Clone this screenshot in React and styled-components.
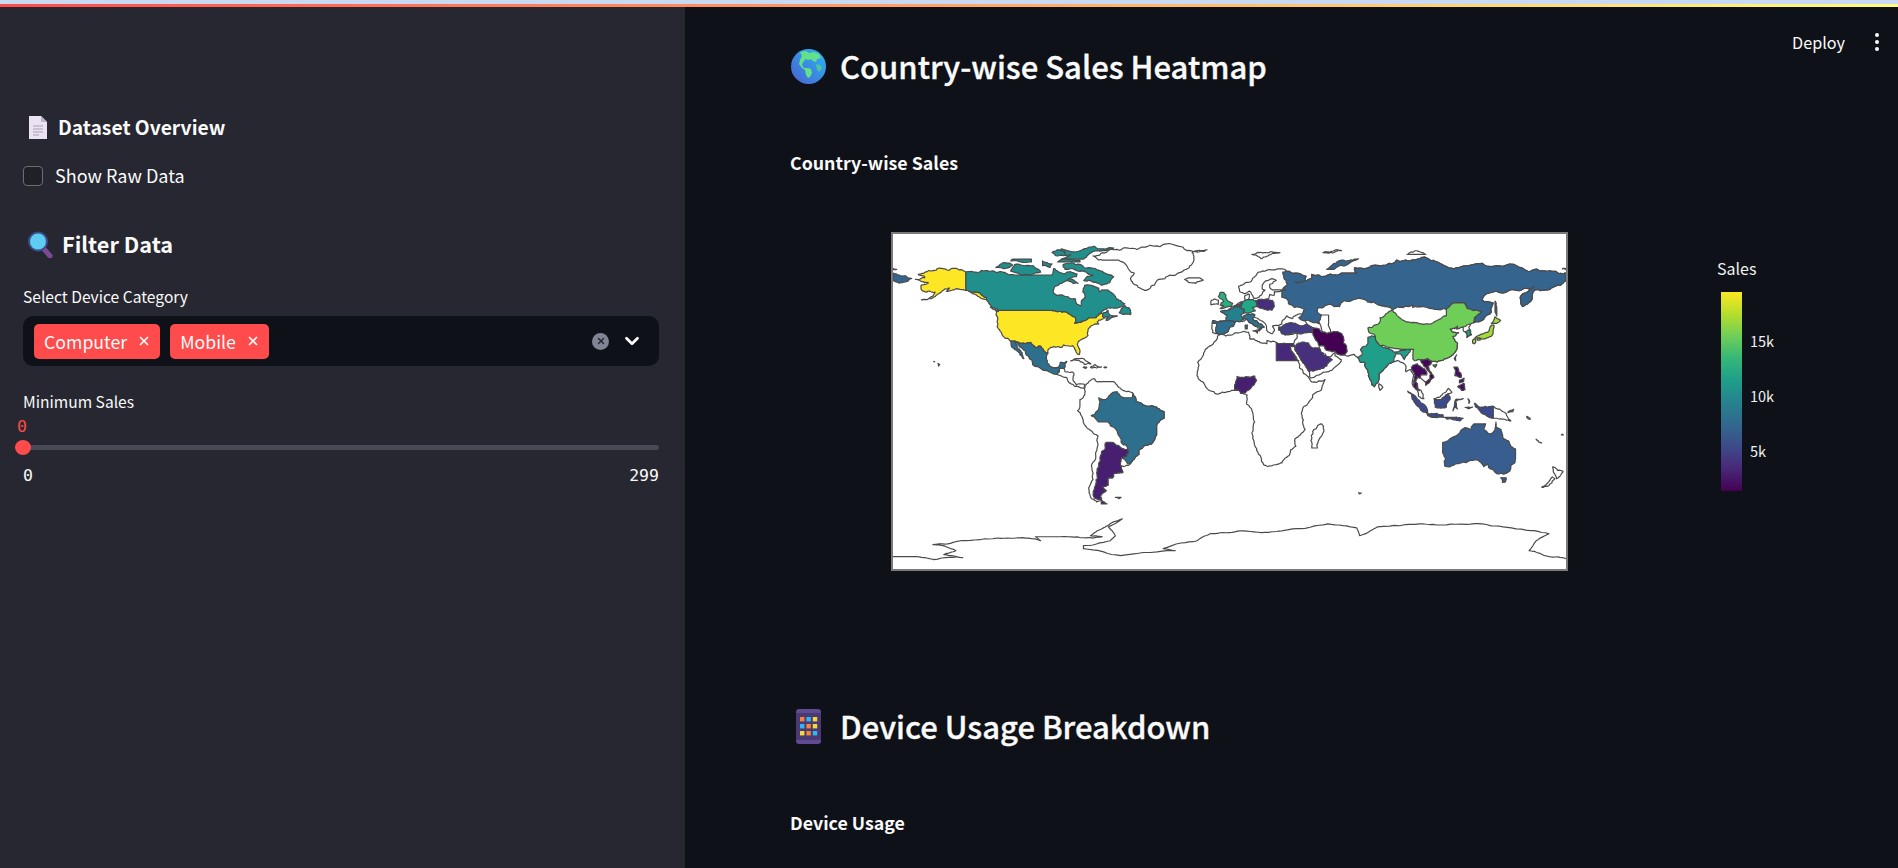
import React from "react";
import styled, { createGlobalStyle } from "styled-components";
import { LuChevronDown, LuX } from "react-icons/lu";

const SANS = `"Noto Sans CJK SC", "Noto Sans", sans-serif`;
const MONO = `"DejaVu Sans Mono", "Liberation Mono", monospace`;

const GlobalStyle = createGlobalStyle`
  html, body {
    margin: 0;
    height: 100%;
    overflow: hidden;
    background: #0e1117;
    font-family: ${SANS};
  }
`;

const Page = styled.div`
  position: relative;
  display: flex;
  height: 868px;
  overflow: hidden;
  color: #fafafa;
`;

const TopStrip = styled.div`
  position: absolute;
  top: 0;
  left: 0;
  right: 0;
  height: 7px;
  background: linear-gradient(#c9d9f2 0 4px, transparent 4px),
    linear-gradient(90deg, #ff4b4b, #fffd80);
`;

const Sidebar = styled.aside`
  width: 685px;
  flex: none;
  box-sizing: border-box;
  padding: 113px 26px 0 23px;
  background: #262730;
`;

const SideHeading = styled.h3`
  display: flex;
  align-items: center;
  margin: ${(p) => p.$top || 0}px 0 0 ${(p) => p.$left || 0}px;
  padding-bottom: 2px;
  gap: ${(p) => p.$gap}px;
  font-size: ${(p) => p.$size}px;
  line-height: ${(p) => p.$line - 2}px;
  font-weight: 600;
`;

const CheckRow = styled.label`
  display: flex;
  align-items: center;
  gap: 12px;
  margin-top: 21px;
  font-size: 18px;
  line-height: 24px;
`;

const CheckLabel = styled.span`
  padding-bottom: 2px;
  line-height: 22px;
`;

const CheckBox = styled.span`
  width: 18px;
  height: 18px;
  border: 1px solid #6b6d78;
  border-radius: 4px;
  background: #1f2028;
`;

const FieldLabel = styled.div`
  margin-top: ${(p) => p.$top}px;
  padding-bottom: 2px;
  font-size: 15.6px;
  line-height: 22px;
`;

const SelectBox = styled.div`
  display: flex;
  align-items: center;
  height: 50px;
  margin-top: 7px;
  padding: 0 16px 0 11px;
  border-radius: 10px;
  background: #0e1117;
`;

const Tags = styled.div`
  display: flex;
  gap: 10px;
  flex: 1;
`;

const Tag = styled.span`
  display: flex;
  align-items: center;
  gap: 10px;
  height: 35px;
  padding: 0 9px 1px 10px;
  box-sizing: border-box;
  border-radius: 5px;
  background: #ff4b4b;
  font-size: 17.7px;
`;

const ClearIcon = styled.span`
  display: flex;
  align-items: center;
  justify-content: center;
  width: 17px;
  height: 17px;
  margin-right: 12px;
  border-radius: 50%;
  background: #808495;
  color: #262730;
`;

const SliderValue = styled.div`
  margin: 3px 0 0 -6px;
  color: #ff4b4b;
  font-family: ${MONO};
  font-size: 16.5px;
  line-height: 20px;
`;

const SliderTrack = styled.div`
  position: relative;
  height: 5px;
  margin: 8px 0 0;
  border-radius: 3px;
  background: #484954;
`;

const SliderThumb = styled.span`
  position: absolute;
  left: -8px;
  top: -5px;
  width: 16px;
  height: 15px;
  border-radius: 50%;
  background: #ff4b4b;
`;

const SliderEnds = styled.div`
  display: flex;
  justify-content: space-between;
  margin-top: 15px;
  font-family: ${MONO};
  font-size: 16.5px;
  line-height: 22px;
`;

const Main = styled.main`
  flex: 1;
  min-width: 0;
  padding: 42px 0 0 105px;
`;

const PageTitle = styled.h2`
  display: flex;
  align-items: center;
  gap: 14px;
  margin: ${(p) => p.$top || 0}px 0 0 1px;
  padding-bottom: 2px;
  font-size: 31px;
  line-height: 48px;
  font-weight: 500;
  -webkit-text-stroke: 0.35px #fafafa;
`;

const ChartTitle = styled.div`
  margin-top: 59px;
  padding-bottom: 2px;
  font-size: 17.8px;
  line-height: 22px;
  font-weight: 700;
`;

const ChartRow = styled.div`
  display: flex;
  align-items: flex-start;
  gap: 149px;
  margin: 57px 0 0 101px;
`;

const MapFrame = styled.svg`
  display: block;
  width: 677px;
  height: 339px;
  box-sizing: border-box;
  border: 2px solid #7a7a7a;
  background: #fff;
`;

const Legend = styled.div`
  padding-top: 26px;
  color: #f0f0f0;
`;

const LegendTitle = styled.div`
  font-size: 16px;
  line-height: 20px;
`;

const LegendBody = styled.div`
  display: flex;
  gap: 8px;
  margin: 14px 0 0 4px;
`;

const ColorBar = styled.div`
  width: 21px;
  height: 199px;
  background: linear-gradient(
    to top,
    #440154,
    #482878,
    #3e4a89,
    #31688e,
    #26828e,
    #1f9e89,
    #35b779,
    #6ece58,
    #b5de2b,
    #fde725
  );
`;

const TickColumn = styled.div`
  display: flex;
  flex-direction: column;
  gap: 35px;
  padding-top: 39px;
  font-size: 14.5px;
  line-height: 20px;
`;

const Toolbar = styled.div`
  position: absolute;
  top: 30px;
  right: 19px;
  display: flex;
  align-items: center;
  gap: 30px;
  font-size: 16.2px;
  line-height: 24px;
`;

const Dots = styled.span`
  display: flex;
  flex-direction: column;
  gap: 3px;
  i {
    width: 4px;
    height: 4px;
    border-radius: 50%;
    background: #fafafa;
  }
`;

const DocIcon = () => (
  <svg width="20" height="23" viewBox="0 0 20 23">
    <path d="M1 0h12l6 6v17H1z" fill="#ece3f2" />
    <path d="M13 0l6 6h-6z" fill="#bdb3c8" />
    <path d="M5 10h10M5 13h10M5 16h10M5 19h6" stroke="#a89fb2" strokeWidth="1" />
  </svg>
);

const SearchIcon = () => (
  <svg width="26" height="27" viewBox="0 0 26 27">
    <path d="M17 18l6 7" stroke="#7c4a94" strokeWidth="5" strokeLinecap="round" />
    <circle cx="11" cy="10.5" r="10" fill="#3b4f8f" />
    <circle cx="11" cy="10.5" r="8" fill="#5fcdf2" />
  </svg>
);

const GlobeIcon = () => (
  <svg width="35" height="35" viewBox="0 0 35 35">
    <defs>
      <linearGradient id="globeFill" x1="0" y1="1" x2="1" y2="0">
        <stop offset="0" stopColor="#4a5fd0" />
        <stop offset="1" stopColor="#2bb8f5" />
      </linearGradient>
    </defs>
    <circle cx="17.5" cy="17.5" r="17.5" fill="url(#globeFill)" />
    <path
      d="M9 3l6-1 3 2 5-1 5 2 2 4-4 1-1 3-3-1-2-2-3 1-3-1-1 3-1 0-1 3 2 3 4 0 3 1 1 4-2 4-2 1-2-3-1-5-3-2-3-4 1-4 2-4z"
      fill="#63e08a"
    />
    <path d="M25 15l4 1 2 3-3 4-2-3z" fill="#4fc6a0" />
  </svg>
);

const GridIcon = () => (
  <svg width="35" height="35" viewBox="0 0 35 35">
    <rect x="5" y="0" width="25" height="35" rx="3" fill="#5f4a96" />
    <rect x="5" y="4" width="25" height="27" fill="#4b3a72" />
    {[0, 1, 2].map((r) =>
      [0, 1, 2].map((c) => (
        <rect
          key={`${r}${c}`}
          x={9 + c * 6.4}
          y={8 + r * 7}
          width="4.4"
          height="4.4"
          fill={["#f58634", "#2bb8f5", "#f5d936"][(r + c * (r === 1 ? 2 : 1)) % 3]}
        />
      ))
    )}
  </svg>
);

// lon,lat rings; the map is a plain equirectangular projection
const X = (lon) => (lon + 180) * 1.875;
const Y = (lat) => (90 - lat) * 1.875;

// roughen coastlines. the offset only depends on the segment midpoint so two
// countries sharing an edge get the same wiggle. straight borders stay straight
const noise = (x, y) => {
  const s = Math.sin(x * 12.9898 + y * 78.233) * 43758.5453;
  return s - Math.floor(s) - 0.5;
};
const roughen = (a, b, depth, amp, out) => {
  const dx = b[0] - a[0];
  const dy = b[1] - a[1];
  const len = Math.hypot(dx, dy);
  if (depth === 0 || len < 0.9 || dx === 0 || dy === 0) {
    out.push(b);
    return;
  }
  const mx = (a[0] + b[0]) / 2;
  const my = (a[1] + b[1]) / 2;
  const mid = [mx + noise(mx, my) * len * amp, my + noise(my, mx) * len * amp];
  roughen(a, mid, depth - 1, amp, out);
  roughen(mid, b, depth - 1, amp, out);
};

const ring = (s) => {
  const pts = s
    .trim()
    .split(/\s+/)
    .map((p) => p.split(",").map(Number));
  const out = [pts[0]];
  for (let i = 1; i < pts.length; i++) roughen(pts[i - 1], pts[i], 3, 0.32, out);
  return (
    "M" + out.map(([lon, lat]) => `${X(lon).toFixed(1)} ${Y(lat).toFixed(1)}`).join("L") + "Z"
  );
};

const LAND = [
  // greenland
  "-73,78.2 -68,80 -62,81.5 -52,82.3 -40,83.5 -25,83 -18,81 -12,81.5 -20,80 -19,76 -20,74 -23,71 -25,70 -32,68 -38,65.5 -42,62 -44,60 -48,61 -51,63 -53,66 -51,69 -54,71 -56,74 -60,76 -68,76 -71,77 -73,78.2",
  "-24,65.5 -22,66.4 -16,66.4 -14,65.3 -18,63.5 -22,64 -24,65.5",
  "12,79 16,80 22,80.5 27,80 20,78 17,76.7 12,79",
  // central america + caribbean
  "-92.2,14.6 -91,16 -91,17.8 -88.5,17.8 -88,16 -84,15.8 -83.2,14.8 -83.6,11 -82,9 -79.5,9.5 -77.3,8.7 -77.9,7.2 -80,7.5 -83,8.2 -85.7,10 -87.5,13 -92.2,14.6",
  "-85,21.8 -82,23 -80,23 -75,20.8 -74.2,20.2 -77.7,19.9 -78,20.7 -82,22.2 -85,21.8",
  "-74.4,18.4 -72,19.9 -68.5,18.6 -71,18 -74.4,18.4",
  "-78.3,18.4 -76.3,18.2 -77,17.8 -78.3,18.4",
  "-67.2,18.4 -65.7,18.3 -66.5,18 -67.2,18.4",
  "-156,20.5 -155,19.8 -155.7,19 -156,20.5",
  "-158.2,21.5 -157.7,21.4 -158,21.3 -158.2,21.5",
  // south america
  "-77.3,8.7 -75,11 -72,12.2 -71.5,11 -68,10.7 -62,10.7 -60,8.5 -57,6 -52,4.8 -50,1 -50,0 -44,-2.5 -39,-3 -35,-5.5 -35,-9 -39,-13 -39,-18 -41,-22 -45,-23.5 -48.5,-26 -48.5,-28.5 -52,-32 -54,-34.3 -58,-34.5 -57,-38 -62,-39 -62.5,-41 -65,-41 -65,-45 -68,-46 -66,-48 -69,-51 -68.3,-52.3 -71,-54 -74,-52 -75,-48 -73,-42 -73.5,-37 -71.5,-30 -70.3,-18.5 -75,-15 -79,-8 -81.3,-5 -80,-2.5 -80,1 -78,3 -77.5,7 -77.3,8.7",
  "-61,-51.5 -58,-51.5 -59,-52.2 -61,-51.5",
  // africa
  "-6,35.8 -2,35.2 3,36.9 10,37.3 11,33.5 15,32.3 20,31 20,32.8 25,31.7 32,31.2 34.3,31.2 32.5,29.9 34,26 37,21 37.5,18 39.5,15 43,12 44,10.5 51.2,11.8 49,6 42,-1 39,-5 39.5,-10 40.5,-15 35,-20 35.5,-24 32.7,-26 32,-29 28,-33 25,-34 20,-34.8 18.3,-34 15,-27 12,-17 13.5,-11 12,-5 9,-1 9.5,3.5 5,6 1,6 -4,5 -8,4.5 -13,8.5 -16.8,12.5 -17.3,14.7 -16.3,19.5 -17,21 -13,27.7 -10,30 -6,35.8",
  "49.3,-12 50.5,-16 47,-25 44,-25 43.5,-21 44.5,-16 49.3,-12",
  // eurasia coast
  "-9,37 -9.5,39 -9,43 -2,43.5 -1.2,46 -4.7,48.4 -1.5,48.7 1.5,50.9 4,52 8,53.8 8.3,57 10.5,57.7 10,55 12,54 14,54 18.5,54.7 21,55.5 21.5,57.5 24,57.2 24,59 28,59.6 30,60 23,60 21.5,61.5 21.5,63 25,65 22,65.8 17.5,62.5 17.5,60.5 19,59.8 16.5,57 14.5,55.5 13,55.4 11.5,58.5 10.7,59.3 8,58 5.5,59 5,62 10,64 14,67.5 19,70 25,71 31,70 41,67.3 40,64.6 35,64.3 38,64 44,66 44,68.3 54,68.5 60,69 68,69 67,72 73,71.5 75,72 80,73 87,74 100,76.3 104,77.7 113,74 128,73 140,72.5 160,69.7 170,70 180,69 180,65 177,62.5 170,60 163,59.8 162,56 156.8,51 155.7,56.5 163,61.5 155,59.5 143,59.3 135,54.7 141,53 140,48 135,43.5 132,43 130,42.3 128,40 129.4,36 127,34.5 126.3,37 125,38 125,40 121.5,39 122,40.5 118,39 119,37.5 122.5,37 119.5,35 122,31 121.5,28 117,23.5 113,22 108.5,21.5 106,19 109.3,13 107,10.5 105,8.8 105,10.5 102,12.7 100.5,13.5 99.5,11 100.5,7 103.5,4 104,1.5 101,3 100,6.5 98.3,8 98.5,14 97,17 94.3,16 94.5,18.5 92,21 90,22 87,21 82,16.5 80,15 80,12 77.5,8 75,12 73,18 72.5,21 70,21 68,24 66.5,25.4 61.5,25 57.5,25.7 56.5,27 52,27.5 50,30 48,30 48,28.5 50,26 51.5,25 51,24 54,24 56.3,26.2 56.5,24.5 59.8,22.5 55,17 52,16 45,13 43.2,12.8 42.7,16 39,21.5 37,25 35,28 34.9,29.5 34.3,31.2 35.5,33.5 36,36.8 32,36 28,36.5 26.3,38.5 26.5,40 29,41 35,42 41.5,41.5 38,44.5 39,47 35,46 33.5,44.5 30.5,46 28,43 28,41.5 26,40.8 23,40.5 24,38 23,36.5 21.5,37 19.5,41 19,42 14,45 12.5,45.5 12.5,44 16,41.5 18.5,40 17,39 16,38 15,40 12,42 8.8,44.4 6,43 3,43 0,39.5 -0.7,37.7 -2.5,36.7 -5.5,36 -9,37",
  "49,46.5 53,46.5 53,42 54,37 50,37.3 49,40 47.5,43 49,46.5",
  "-10,52 -6,52.2 -6,54.5 -8,55.2 -10,54 -10,52",
  "80,9.6 82,7.5 80.5,6 79.8,8 80,9.6",
  // borneo north (malaysia stays white here)
  "109.5,1.5 113,3 117,7 119,5 117,4.2 115,2.5 113,1 109.5,1.5",
  "141,-2.6 145,-4.5 148,-6.5 150.5,-10.5 147,-9.5 143,-9 141,-9 141,-2.6",
  "149,-5.5 152,-4.2 151.5,-5.5 149,-6 149,-5.5",
  "167,-46 171,-45 174,-41.5 172.7,-40.5 167,-46",
  "173,-35 175.5,-37 178.5,-37.7 175,-41.5 174,-39 173,-35",
  "69,-49 70.5,-49.2 69.5,-49.7 69,-49",
  "165,-21 167,-22.3 165.5,-21.8 164,-20.3 165,-21",
  "159,-8 161,-9.5 160,-9.5 159,-8",
  "178,-17.5 178.6,-18 177.5,-18 178,-17.5",
  "95,79 105,79 100,81 95,79",
  "50,80 60,81 56,80.2 50,80",
  "-180,71.5 -178,71 -180,70.8 -180,71.5",
  "178,71.3 180,71.5 180,70.8 178,71.3",
];

const COUNTRIES = [
  // north america
  ["#fde725", "-124.7,48.4 -123,49 -95.2,49 -94.6,48.7 -92,48.3 -89.5,48 -88.4,48.3 -84.8,46.5 -82.5,45.3 -82.1,43.6 -82.9,42.1 -79,42.8 -79,43.4 -76.5,44 -75,45 -71.5,45 -70.2,46.3 -69.2,47.4 -68,47.3 -67.8,45.7 -67,44.8 -70,43.7 -70.7,42.7 -70,41.7 -74,40.7 -75.5,39 -76,37 -75.7,35.5 -77.9,33.9 -81,32 -81.4,30.5 -80,26.9 -80.4,25.2 -81.8,26.1 -82.8,28 -84,30 -85.5,29.7 -89,30.3 -89.5,29.2 -91.5,29.5 -94,29.6 -97.2,27.7 -97.2,25.9 -99.5,27.5 -101.4,29.8 -103,29 -104.7,30 -106.5,31.8 -108.2,31.5 -111,31.3 -114.8,32.5 -117.1,32.5 -118.5,34 -120.6,34.6 -122.5,37.5 -124.3,40.3 -124,44 -124.7,48.4"],
  ["#fde725", "-141,69.6 -141,60.3 -137,59 -133.5,58.5 -130,56 -130,54.8 -133,55.5 -136,57.5 -140,59.8 -145,60.3 -148,60 -151.5,59.3 -149.8,61 -152,60.5 -154,59 -157,57 -161,55.2 -164.8,54.6 -160,56 -157.5,58.8 -162,58.7 -165,60.5 -165,62.5 -161,63.8 -165,64.5 -168,65.6 -163,66.5 -166.5,68.3 -161,70.3 -156.5,71.3 -150,70.5 -141,69.6"],
  ["#21908d", "-141,69.6 -135,69.3 -128,70 -120,69.4 -115,68 -108,68 -100,68 -95,68 -94,71.5 -92,70 -88,68.5 -85,69.8 -81.5,68.5 -82,67 -87,65 -93,62 -94.5,59 -92.5,57 -88,56.5 -82.3,55 -82,52.9 -79.5,51.5 -79,54.5 -77,56 -78.5,59 -77.5,62.4 -73.5,62.3 -70,61 -69.5,59 -65.5,60 -62,57.5 -60,55 -56,52.5 -60,50.2 -65,50.3 -67,49.3 -70,47 -65,49 -64.5,47 -61,46 -60,46 -63.5,44.7 -66,43.6 -66,44.5 -64.5,45.5 -67,45.2 -67.8,45.7 -68,47.3 -69.2,47.4 -70.2,46.3 -71.5,45 -75,45 -76.5,44 -79,43.4 -79,42.8 -82.9,42.1 -82.1,43.6 -82.5,45.3 -84.8,46.5 -88.4,48.3 -89.5,48 -92,48.3 -94.6,48.7 -95.2,49 -123,49 -125,50 -128,52 -130,54.8 -130,56 -133.5,58.5 -137,59 -141,60.3 -141,69.6"],
  ["#21908d", "-80,73.7 -72,71.5 -68,70 -62,67 -64,64 -68,62.5 -72,64 -78,65 -73,68 -78,70 -88,71 -89,73.5 -80,73.7"],
  ["#21908d", "-117,70 -105,68.5 -101,69.5 -105,73 -115,73.5 -117,70"],
  ["#21908d", "-90,76.5 -78,76.5 -76,78.5 -65,81.5 -62,82.5 -75,83 -90,82 -92,80 -85,79 -90,76.5"],
  ["#21908d", "-125,72 -120,71.5 -116,73.2 -120,74.5 -125,72"],
  ["#21908d", "-92,75 -80,75 -80,76 -90,76.3 -92,75"],
  ["#21908d", "-95,80 -88,78.5 -88,80.5 -92,81.5 -95,80"],
  ["#21908d", "-117,75.5 -106,75 -106,76.5 -116,76.5 -117,75.5"],
  ["#21908d", "-100,73 -96,72 -95,74 -100,75.5 -100,73"],
  ["#21908d", "-87,65 -81,63.5 -83,65 -86,66 -87,65"],
  ["#21908d", "-59,47.6 -53,46.7 -52.7,47.6 -56,51.6 -59,47.6"],
  ["#21908d", "-128,50.7 -123.5,48.4 -125,48.8 -128,50.7"],
  ["#2f6f8e", "-117.1,32.5 -114.8,32.5 -111,31.3 -108.2,31.5 -106.5,31.8 -104.7,30 -103,29 -101.4,29.8 -99.5,27.5 -97.2,25.9 -97.8,22.5 -96,19 -94.5,18.2 -91.5,18.5 -90.5,21 -87,21.5 -88,18.5 -88.5,17.8 -91,17.8 -91,16 -92.2,14.6 -96,15.8 -100,17 -105,19.5 -105.5,22 -109,25.7 -112.5,29.5 -114.7,31.7 -113,28.5 -110.5,24.5 -110,23 -112,25 -115,28 -117.1,32.5"],
  // south america
  ["#2f6f8e", "-60,5.2 -56,2 -52,2 -51.5,4.3 -50,1 -50,0 -44,-2.5 -39,-3 -35,-5.5 -35,-9 -39,-13 -39,-18 -41,-22 -45,-23.5 -48.5,-26 -48.5,-28.5 -52,-32 -53.4,-33.7 -57.6,-30.2 -54,-27 -54.5,-25.5 -55,-24 -58,-22 -58,-20 -60,-16.3 -65,-11 -70,-11 -74,-7.5 -70,-4.2 -69.5,-1 -70,2 -66,1 -63.5,4 -60,5.2"],
  ["#481f70", "-66,-22 -62.5,-22 -58,-24.8 -54.5,-25.5 -54,-27 -57.6,-30.2 -58.4,-34 -57,-38 -62,-39 -62.5,-41 -65,-41 -65,-45 -68,-46 -66,-48 -69,-51 -68.5,-52.3 -72,-52 -73,-50 -71.5,-44 -71,-38 -70,-33 -68.5,-27 -66,-22"],
  ["#481f70", "-68.6,-52.6 -65.5,-55 -68.6,-55 -68.6,-52.6"],
  // europe
  ["#2ab07f", "-5,50 1.3,51.2 1.7,52.7 0,53.5 -1.5,55 -2,56 -2,57.5 -3.2,58.6 -5,58.6 -6,56.5 -3,54 -4.5,53 -5,51.7 -3,51.4 -5,50"],
  ["#25808e", "2.5,51 8.2,49 7.5,47.5 6,46.3 7.5,44 3,43 3,42.5 -1.8,43.4 -1.2,46 -4.7,48.4 -1.5,48.7 1.5,50 2.5,51"],
  ["#2e6e8e", "-9,43.5 -1.8,43.4 3,42.5 0,39.5 -0.7,37.7 -2.5,36.7 -5.5,36 -7.3,37.2 -7,42 -9,42 -9,43.5"],
  ["#31688e", "3,51.3 4,52 7,53.5 6,51 3,51.3"],
  ["#22a884", "6,51 7,53.5 8.5,54.5 10,54.8 14,54 15,51 12.2,50.3 13.8,48.6 10,47.4 7.5,47.5 8.2,49 6,51"],
  ["#2c728e", "7,44 7.5,46 10,46.8 13.7,46.5 12.5,45 12.5,44 16,41.7 18.5,40 16.8,39.5 16,38 15.7,40 12,42 8.8,44.4 7,44"],
  ["#2c728e", "12.5,38 15.5,38.2 15,36.7 12.5,38"],
  ["#2c728e", "8.3,41 9.7,41 9.5,39 8.5,39 8.3,41"],
  ["#472d7b", "14,54 18.5,54.7 23,54.3 24,51 22.5,49.1 19,49.4 15,51 14,54"],
  ["#433e85", "26.3,38.5 26.5,40 29,41 35,42 41.5,41.5 44.8,39.7 44.5,37 36.5,36.5 32,36 28,36.5 26.3,38.5"],
  // russia
  ["#35648f", "28,59.6 30,60 28.5,60.5 31,63 29,66.5 28.5,69.5 31,70 41,67.3 40,64.6 35,64.3 38,64 44,66 44,68.3 54,68.5 60,69 68,69 67,72 73,71.5 75,72 80,73 87,74 100,76.3 104,77.7 113,74 128,73 140,72.5 160,69.7 170,70 180,69 180,65 177,62.5 170,60 163,59.8 162,56 156.8,51 155.7,56.5 163,61.5 155,59.5 143,59.3 135,54.7 141,53 140,48 135,43.5 132,43 130.7,42.3 131,45 135,48.4 130.5,48.8 127,50 125.5,53 120,53 117,49.6 107,50 98,50.5 98,52 92,50.7 87,49.2 83,51 77,53.5 71,55.2 61,54 59,51 51,51.5 47,50 47,48 49,46.5 47.5,43 48,41.8 44,42.7 40,43.5 37,45 39,47 40,49.6 35,50.5 31.5,52.5 31,55 28,56 28,59.6"],
  ["#35648f", "52,71 56,71 69,76.7 60,76 52,71"],
  ["#35648f", "142,54 143,50 143,46 142,48 142,54"],
  ["#35648f", "-180,69 -175,67.5 -170,66 -173,64.3 -180,65 -180,69"],
  // middle east
  ["#440154", "44.8,39.7 48,39 49,37.5 54,37 60,36.5 61,31.5 63,27 61.5,25 57.5,25.7 56.5,27 52,27.5 50,30 48,30 46,33 44.5,37 44.8,39.7"],
  ["#472f7d", "34.9,29.5 37,31.5 39,32 44,29 48,28.5 50,26 51.5,24.5 55,22.5 52,19 47,17 43.2,16.5 42.7,16 39,21.5 37,25 35,28 34.9,29.5"],
  ["#482878", "25,31.7 32,31.2 34.3,31.2 34.3,29.5 32.5,29.9 34,26 37,22 25,22 25,31.7"],
  ["#471f6e", "2.7,6.3 2.7,9 3.7,11.7 4,13.5 7,13 10,13.3 13.6,13.7 14.5,11.5 13.2,9 11,6.7 8.5,4.7 6,4.3 4.3,6.3 2.7,6.3"],
  // asia
  ["#1f9e89", "74,34.5 78,35 79,32 81,30 88,26.5 92,27.5 97,28.5 95.5,25.5 93.5,22.5 92.3,24.5 91.5,25.5 89,26 88.5,24 88,22 87,21 82,16.5 80,15 80,12 77.5,8 75,12 73,18 72.5,21 70,21 68.5,23.7 71,25 70,28 74,31 74,34.5"],
  ["#6ece58", "74,39.5 80,42 80.5,45 87,49 91,45 96,42.7 105,41.7 111,43.5 116,46 116,49.5 120,53 125.5,53 127,50 130.5,48.8 135,48.4 131,45 130.7,42.7 128,41.5 124.3,40 121.5,39 122,40.5 118,39 119,37.5 122.5,37 119.5,35 122,31 121.5,28 117,23.5 113,22 108.5,21.5 106,23 102,22.4 99,22 98,25 98.5,28 92,28 81,30 79,32 78,35 74,39.5"],
  ["#2ab07f", "108.8,19.6 110.8,20 110,18.4 108.8,19.6"],
  ["#35648f", "120.2,23 121.5,25 121,22 120.2,23"],
  ["#a5db36", "130.9,34 135,33.5 140,35 141,38 141.5,41 140,41 139,38 136,36.5 132,35 130.9,34"],
  ["#a5db36", "140,42 143,42 145,43.5 142,45.5 141,43 140,42"],
  ["#a5db36", "130,33 131.8,33.5 131,31 130,31.5 130,33"],
  ["#a5db36", "132.5,34 134.5,34 134,33 132.5,33 132.5,34"],
  ["#1fa187", "126.3,37.6 128.5,38.5 129.4,36 127,34.5 126.3,37.6"],
  ["#46085c", "98.5,10 99.5,11 100.5,13.5 102,12.7 102.5,14.3 105.5,14.3 104.5,17.5 101,19.5 100.5,20.3 98,19.5 97.5,17 99,15 98.5,10"],
  ["#46085c", "98.5,9.5 99.5,10.5 100.5,7 101.5,5.8 100,6.5 98.5,8 98.5,9.5"],
  ["#450457", "102,22.4 106,23 108,21.5 106,19 109.3,13 107,10.5 105,8.8 105,10.5 107,12 107.5,15 105,18.5 103,20.5 102,22.4"],
  ["#440f60", "120,18.5 122,18.5 124,13 120.5,14 120,18.5"],
  ["#440f60", "122,8 125.5,9.7 126,6.5 124,6 122,8"],
  ["#440f60", "123,11.5 125.5,12.5 125,10.5 123,10 123,11.5"],
  ["#3b4a8f", "95.3,5.6 98,4 104,-1.5 106,-6 102,-4 98.5,0.5 95.3,5.6"],
  ["#3b4a8f", "105.5,-6.5 114,-7 114.5,-8.5 106,-7.5 105.5,-6.5"],
  ["#3b4a8f", "109.5,1.5 113,1 115,2.5 117,4.2 118,1 116,-3 114,-3.5 110,-3 109.5,1.5"],
  ["#3b4a8f", "119.5,-5 121,1 125,1.5 120.5,0 122,-4 120.5,-3 119.5,-5"],
  ["#3b4a8f", "131,-1 135,-3 141,-2.6 141,-9 138,-8 133,-4 131,-1"],
  ["#3b4a8f", "115,-8.5 120,-8.5 125,-9 123.5,-10.3 119,-9.5 115,-8.5"],
  ["#3b4a8f", "127.5,1.5 128.5,0 128,-1 127.5,1.5"],
  ["#3b4a8f", "126,-3.2 130,-3 128,-3.8 126,-3.2"],
  // australia
  ["#375e8f", "114,-22 114,-26 115.5,-31 115,-34.5 118,-35 124,-33 129,-31.5 134,-32.5 136,-35 138,-33.5 138.5,-35.5 143,-38.8 146.5,-39 150,-37.3 153,-31 153,-25.5 149,-21 146,-19 145.3,-15 143,-14 142.5,-11 141,-16.5 139.5,-17.5 136,-15 137,-12 131,-12 129,-15 126,-14 122,-18 118,-20 114,-22"],
  ["#375e8f", "145,-41 148,-41 147.5,-43.3 146,-43.5 145,-41"],
];

// traced straight on the map's own pixels
const ANTARCTICA = [
  [0, 325], [21, 325], [41, 328], [70, 326], [51, 323], [63, 319], [50, 314], [40, 313],
  [63, 310], [100, 307], [125, 306], [148, 309], [143, 305], [168, 305], [191, 306],
  [210, 305], [198, 304], [205, 299], [215, 294], [230, 287], [216, 295], [223, 304],
  [218, 309], [191, 314], [191, 317], [228, 324], [283, 319], [271, 317], [305, 309],
  [318, 302], [328, 301], [351, 299], [380, 300], [401, 297], [436, 292], [465, 296],
  [468, 304], [486, 295], [528, 292], [555, 293], [591, 292], [625, 297], [658, 302],
  [645, 309], [638, 319], [658, 325], [675, 327],
];

const antarcticaPath = () => {
  const out = [ANTARCTICA[0]];
  for (let i = 1; i < ANTARCTICA.length; i++) {
    roughen(ANTARCTICA[i - 1], ANTARCTICA[i], 3, 0.1, out);
  }
  return "M" + out.map(([x, y]) => `${x.toFixed(1)} ${y.toFixed(1)}`).join("L");
};

const WorldMap = () => (
  <MapFrame viewBox="0 0 675 337.5" preserveAspectRatio="none">
    <g stroke="#4a4a4a" strokeWidth="1.2" strokeLinejoin="round">
      {LAND.map((r, i) => (
        <path key={i} d={ring(r)} fill="#fff" />
      ))}
      {COUNTRIES.map(([fill, r], i) => (
        <path key={i} d={ring(r)} fill={fill} />
      ))}
      <path d={antarcticaPath()} fill="none" />
    </g>
  </MapFrame>
);

export default function App() {
  return (
    <Page>
      <GlobalStyle />
      <Sidebar>
        <SideHeading $size={19.3} $line={30} $gap={10} $left={5}>
          <DocIcon />
          Dataset Overview
        </SideHeading>
        <CheckRow>
          <CheckBox />
          <CheckLabel>Show Raw Data</CheckLabel>
        </CheckRow>
        <SideHeading $size={21.7} $line={34} $gap={9} $top={40} $left={4}>
          <SearchIcon />
          Filter Data
        </SideHeading>
        <FieldLabel $top={23}>Select Device Category</FieldLabel>
        <SelectBox>
          <Tags>
            <Tag>
              Computer
              <LuX size={14} strokeWidth={3} />
            </Tag>
            <Tag>
              Mobile
              <LuX size={14} strokeWidth={3} />
            </Tag>
          </Tags>
          <ClearIcon>
            <LuX size={10} strokeWidth={3.5} />
          </ClearIcon>
          <LuChevronDown size={22} strokeWidth={3} />
        </SelectBox>
        <FieldLabel $top={24}>Minimum Sales</FieldLabel>
        <SliderValue>0</SliderValue>
        <SliderTrack>
          <SliderThumb />
        </SliderTrack>
        <SliderEnds>
          <span>0</span>
          <span>299</span>
        </SliderEnds>
      </Sidebar>
      <Main>
        <PageTitle>
          <GlobeIcon />
          Country-wise Sales Heatmap
        </PageTitle>
        <ChartTitle>Country-wise Sales</ChartTitle>
        <ChartRow>
          <WorldMap />
          <Legend>
            <LegendTitle>Sales</LegendTitle>
            <LegendBody>
              <ColorBar />
              <TickColumn>
                <span>15k</span>
                <span>10k</span>
                <span>5k</span>
              </TickColumn>
            </LegendBody>
          </Legend>
        </ChartRow>
        <PageTitle $top={131}>
          <GridIcon />
          Device Usage Breakdown
        </PageTitle>
        <ChartTitle>Device Usage</ChartTitle>
      </Main>
      <Toolbar>
        Deploy
        <Dots>
          <i />
          <i />
          <i />
        </Dots>
      </Toolbar>
      <TopStrip />
    </Page>
  );
}
